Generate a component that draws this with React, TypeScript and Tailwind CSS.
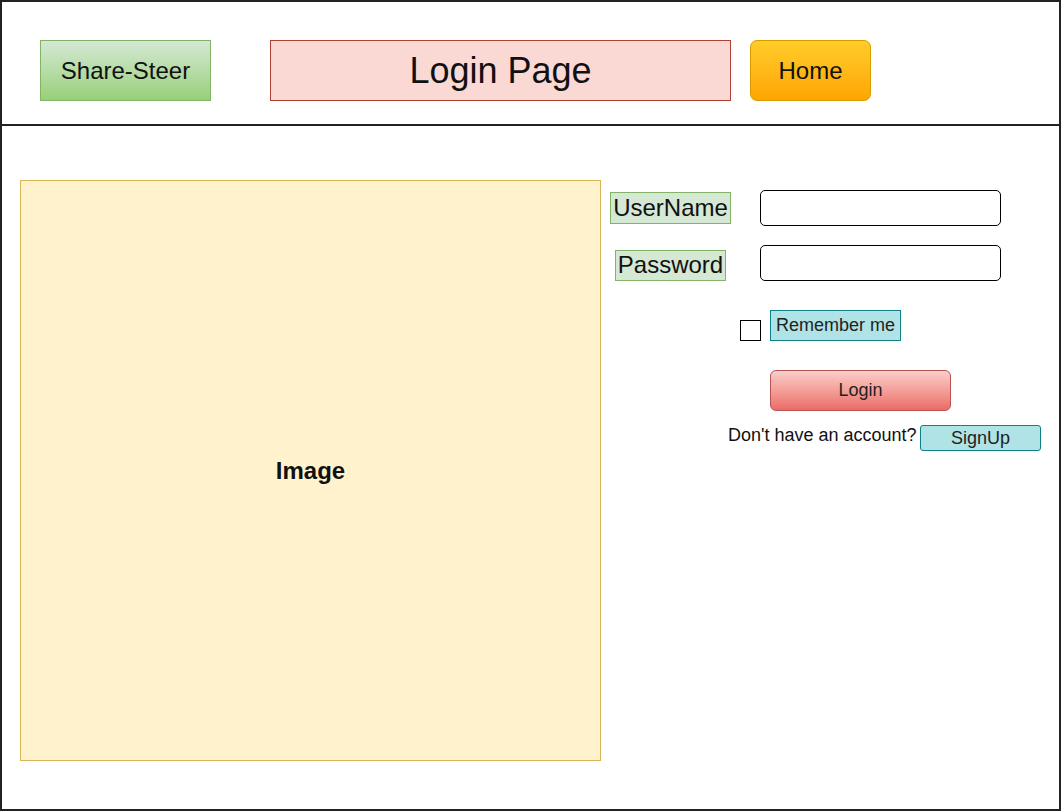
import React from 'react';

const font = { fontFamily: '"Liberation Sans", Arial, sans-serif' };

const App: React.FC = () => {
  return (
    <div className="w-[1061px] h-[811px] bg-white text-[#111]" style={font}>
      <div className="w-full h-full border-2 border-[#222] flex flex-col">
        {/* header */}
        <div className="h-[124px] border-b-2 border-[#222] flex items-start pt-[38px] pl-[38px] shrink-0">
          <div className="w-[171px] h-[61px] border border-[#82b366] bg-gradient-to-b from-[#d5e8d4] to-[#97d077] flex items-center justify-center text-[24px]">
            Share-Steer
          </div>
          <div className="ml-[59px] w-[461px] h-[61px] border border-[#ae4132] bg-[#fad9d5] flex items-center justify-center text-[36px]">
            Login Page
          </div>
          <div className="ml-[19px] w-[121px] h-[61px] rounded-[7px] border border-[#d79b00] bg-gradient-to-b from-[#ffcd28] to-[#ffa500] flex items-center justify-center text-[24px]">
            Home
          </div>
        </div>

        {/* body */}
        <div className="flex items-start pl-[18px] pt-[54px]">
          <div className="w-[581px] h-[581px] border border-[#d6b656] bg-[#fff2cc] flex items-center justify-center text-[24px] font-bold">
            Image
          </div>

          <div className="ml-[4px] mt-[10px] flex flex-col">
            <div className="flex items-center h-[36px]">
              <div className="w-[131px] flex justify-center">
                <span className="w-[121px] h-[32px] border border-[#82b366] bg-[#d5e8d4] flex items-center justify-center text-[24px]">
                  UserName
                </span>
              </div>
              <input className="ml-[24px] w-[241px] h-[36px] rounded-[5px] border border-black bg-white outline-none px-2" />
            </div>

            <div className="flex items-center h-[36px] mt-[19px]">
              <div className="w-[131px] flex justify-center">
                <span className="w-[111px] h-[31px] mt-[4px] border border-[#82b366] bg-[#d5e8d4] flex items-center justify-center text-[24px]">
                  Password
                </span>
              </div>
              <input type="password" className="ml-[24px] w-[241px] h-[36px] rounded-[5px] border border-black bg-white outline-none px-2" />
            </div>

            <div className="flex items-end mt-[29px] ml-[135px]">
              <span className="w-[21px] h-[21px] border border-black bg-white" />
              <span className="ml-[9px] w-[131px] h-[31px] border border-[#0e8088] bg-[#b0e3e6] flex items-center justify-center text-[18px] text-[#222]">
                Remember me
              </span>
            </div>

            <button className="mt-[29px] ml-[165px] w-[181px] h-[41px] rounded-[6px] border border-[#b85450] bg-gradient-to-b from-[#f8cecc] to-[#ea6b66] text-[18px] text-[#222]">
              Login
            </button>

            <div className="flex items-start mt-[14px] ml-[123px]">
              <span className="w-[192px] text-[18px] leading-[20px] text-[#111] whitespace-nowrap">Don't have an account?</span>
              <button className="w-[121px] h-[26px] rounded-[3px] border border-[#0e8088] bg-[#b0e3e6] text-[18px] leading-[24px] text-[#222]">
                SignUp
              </button>
            </div>
          </div>
        </div>
      </div>
    </div>
  );
};

export default App;
